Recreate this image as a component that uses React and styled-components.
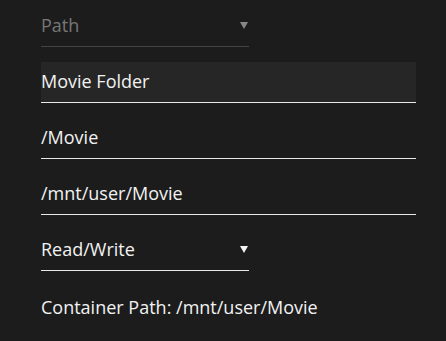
import React from "react"
import styled, { createGlobalStyle } from "styled-components"

const GlobalStyle = createGlobalStyle`
  html, body {
    margin: 0;
    padding: 0;
    background: #1c1c1c;
  }
  body {
    font-family: "Open Sans", "DejaVu Sans", sans-serif;
  }
`

const Wrapper = styled.div`
  width: 446px;
  height: 341px;
  box-sizing: border-box;
  padding: 6px 0 0 41px;
  background: #1c1c1c;
  display: flex;
  flex-direction: column;
  gap: 15px;
`

const Field = styled.div`
  box-sizing: border-box;
  width: ${(p) => (p.narrow ? "208px" : "375px")};
  height: 41px;
  display: flex;
  align-items: center;
  justify-content: space-between;
  border-bottom: 1px solid ${(p) => (p.muted ? "#444" : "#e8e8e8")};
  background: ${(p) => (p.filled ? "#262626" : "transparent")};
  color: ${(p) => (p.muted ? "#777" : "#f2f2f2")};
  font-size: 18px;
  padding-bottom: 3px;
`

const Arrow = styled.span`
  width: 0;
  height: 0;
  margin-right: 1px;
  margin-top: 2px;
  border-left: 4px solid transparent;
  border-right: 4px solid transparent;
  border-top: 7px solid ${(p) => (p.muted ? "#888" : "#f2f2f2")};
`

const Note = styled.div`
  color: #f2f2f2;
  font-size: 18px;
  margin-top: 9px;
`

const App = () => {
  return (
    <Wrapper>
      <GlobalStyle />
      <Field narrow muted>
        Path
        <Arrow muted />
      </Field>
      <Field filled>Movie Folder</Field>
      <Field>/Movie</Field>
      <Field>/mnt/user/Movie</Field>
      <Field narrow>
        Read/Write
        <Arrow />
      </Field>
      <Note>Container Path: /mnt/user/Movie</Note>
    </Wrapper>
  )
}

export default App
